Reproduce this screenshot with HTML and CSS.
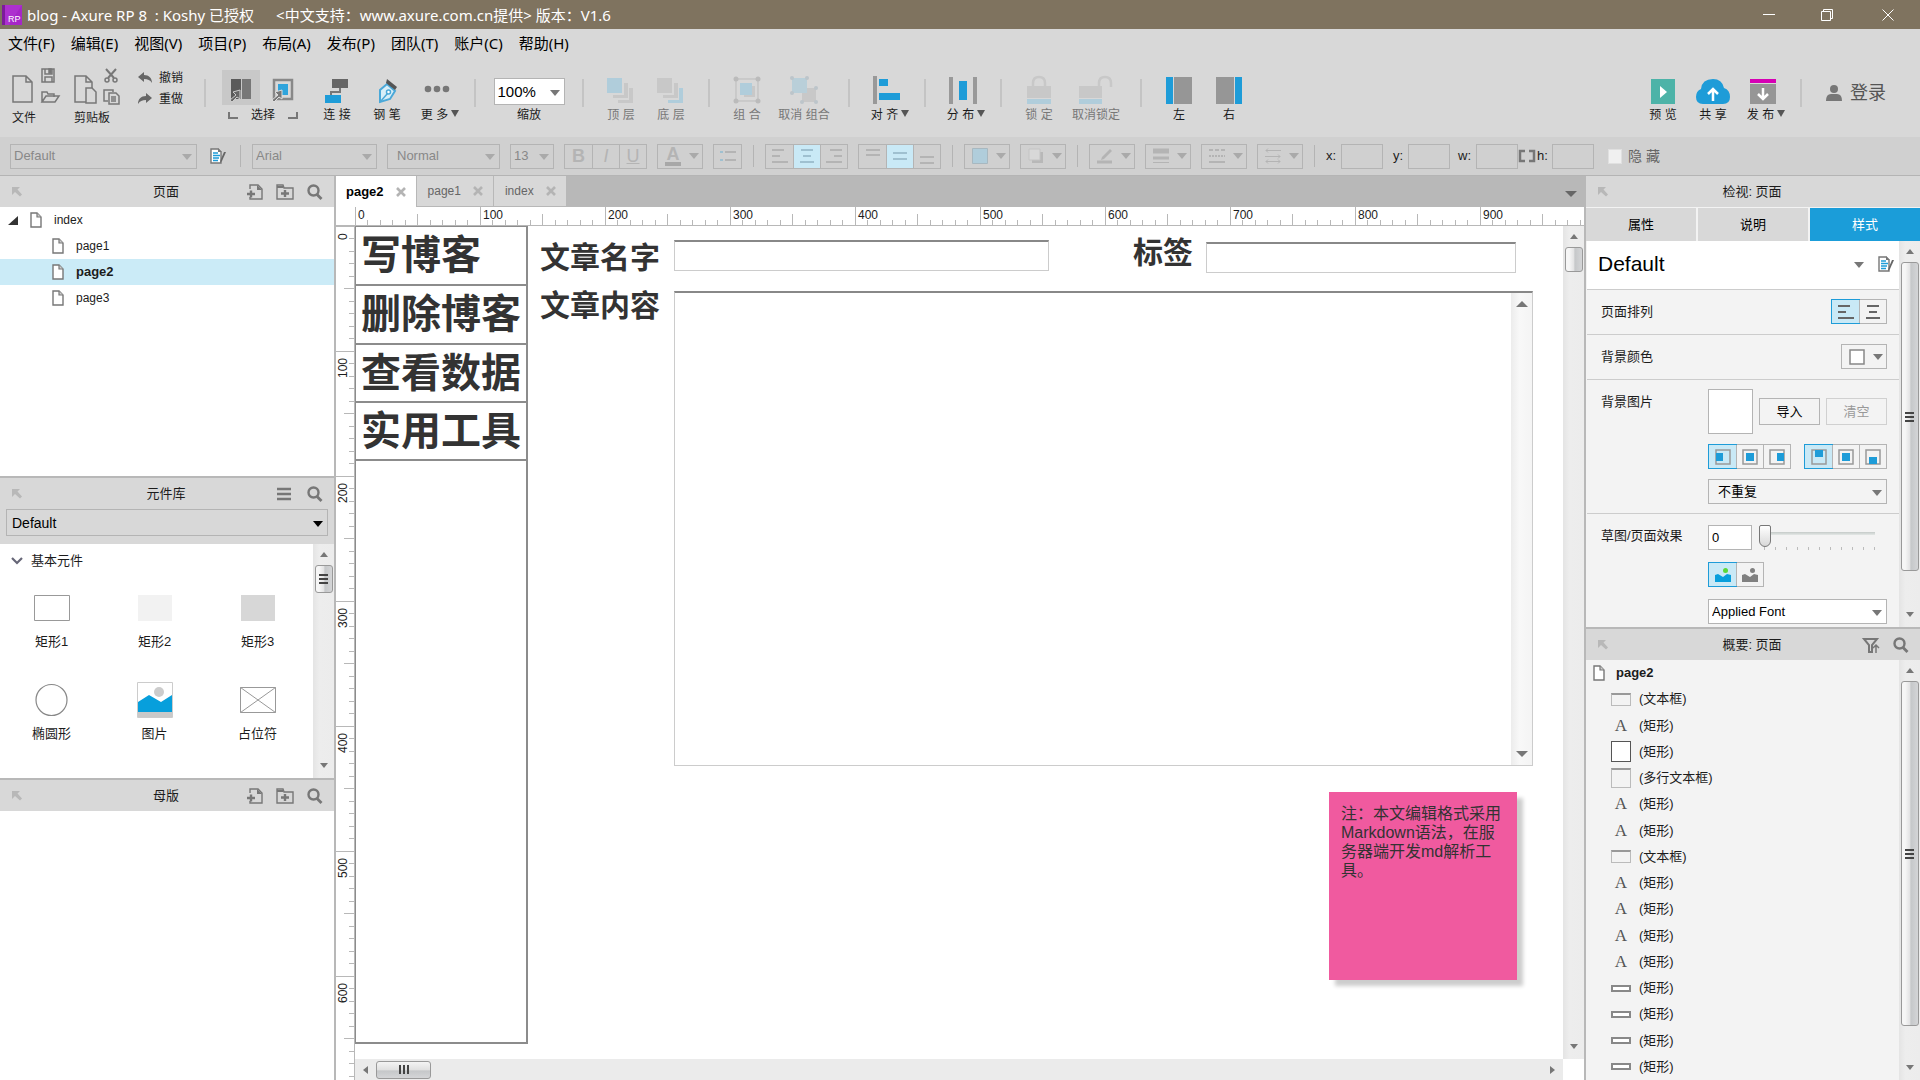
FILE: index.html
```html
<!DOCTYPE html>
<html lang="zh-CN">
<head>
<meta charset="utf-8">
<title>blog - Axure RP 8</title>
<link rel="stylesheet" href="styles.css">
</head>
<body>
<svg class="defs" aria-hidden="true">
  <symbol id="page" viewBox="0 0 12 16"><path d="M1 1h6l4 4v10H1z" fill="#fff" stroke="#777" stroke-width="1.4"/><path d="M7 1v4h4" fill="#ccc" stroke="#777" stroke-width="1.2"/></symbol>
  <symbol id="search" viewBox="0 0 16 16"><circle cx="6.5" cy="6.5" r="5" fill="none" stroke="#777" stroke-width="2.4"/><path d="M10 10.5l4.500 4.500" stroke="#777" stroke-width="2.8"/></symbol>
  <symbol id="pop" viewBox="0 0 10 10"><path d="M0 0h8L5.500 2.500 10 7.500 8 9.500 3 5 0 8z" fill="#b8b8b8"/></symbol>
  <symbol id="addpage" viewBox="0 0 16 16"><path d="M3 5V1h8l4 4v10H3v-2" fill="none" stroke="#777" stroke-width="1.4"/><path d="M10 1v5h5z" fill="#777"/><path d="M0 10h8M4 6.500v7" stroke="#777" stroke-width="2.400"/></symbol>
  <symbol id="addfolder" viewBox="0 0 18 16"><path d="M1 15V1h6l1 3h9v11z" fill="none" stroke="#777" stroke-width="1.400"/><path d="M1 2h6v2H1z" fill="#777"/><path d="M5 9.500h8M9 6v7" stroke="#777" stroke-width="2.400"/></symbol>
  <symbol id="x" viewBox="0 0 10 10"><path d="M1 1l8 8M9 1L1 9" stroke="#b4b4b4" stroke-width="2.600"/></symbol>
  <symbol id="style" viewBox="0 0 17 16"><path d="M1 1h7l3 3v11H1z" fill="#fff" stroke="#777" stroke-width="1.400"/><path d="M8 0v4h4z" fill="#777"/><path d="M3 5h5M3 7.500h7M3 10h6M3 12.500h5" stroke="#1e9cd8" stroke-width="1.500"/><path d="M16 4l-4 9-2 2 .500-3 3.500-8z" fill="#666"/></symbol>
  <symbol id="al" viewBox="0 0 16 16"><path d="M0 2h12M0 8h8M0 14h16" stroke="currentColor" stroke-width="2"/></symbol>
  <symbol id="ac" viewBox="0 0 16 16"><path d="M2 2h12M4 8h8M1 14h14" stroke="currentColor" stroke-width="2"/></symbol>
  <symbol id="ar" viewBox="0 0 16 16"><path d="M4 2h12M8 8h8M0 14h16" stroke="currentColor" stroke-width="2"/></symbol>
  <symbol id="thumb-pic" viewBox="0 0 16 14"><circle cx="10.500" cy="2.500" r="2.500" fill="var(--sun)"/><path d="M0 7l3-1 5 3 4-3 4 1v7H0z" fill="currentColor"/></symbol>
</svg>

<header class="titlebar">
  <svg class="logo" width="20" height="20" viewBox="0 0 20 20"><path d="M0 0h20v20H0z" fill="#a626c8"/><path d="M0 0h3v20H0z" fill="#7d1a9c"/><path d="M3 0h17L7 20H3z" fill="#b43ad6" opacity=".5"/><text x="6" y="17" class="logo-text">RP</text></svg>
  <h1 class="title">blog - Axure RP 8&nbsp; : Koshy 已授权<span class="title-extra">&lt;中文支持：www.axure.com.cn提供&gt; 版本：V1.6</span></h1>
  <button class="win" aria-label="最小化"><svg width="12" height="12"><path d="M0 5.500h12" stroke="#fff"/></svg></button>
  <button class="win" aria-label="还原"><svg width="12" height="12"><path d="M.5 2.500h9v9h-9zM2.500 2.500v-2h9v9h-2" fill="none" stroke="#fff"/></svg></button>
  <button class="win" aria-label="关闭"><svg width="12" height="12"><path d="M.5.500l11 11M11.500.500l-11 11" stroke="#fff"/></svg></button>
</header>

<nav class="menubar">
  <button>文件(F)</button><button>编辑(E)</button><button>视图(V)</button><button>项目(P)</button><button>布局(A)</button><button>发布(P)</button><button>团队(T)</button><button>账户(C)</button><button>帮助(H)</button>
</nav>

<div class="toolbar">
  <div class="filegroup">
    <svg width="47" height="38" viewBox="0 0 47 38" fill="none" stroke="#777" stroke-width="1.500">
      <path d="M1 8h13l6 6v20H1zM14 8v6h6"/>
      <path d="M30 1h12v13H30zM33 1v5h7V1M33 14V9h7v5"/><path d="M37 1h2v4h-2z" fill="#777"/>
      <path d="M30 34V24h5l1 2h6v3M30 34l4-6h13l-4 6z"/>
    </svg>
    <span>文件</span>
  </div>
  <div class="filegroup clip">
    <svg width="47" height="38" viewBox="0 0 47 38" fill="none" stroke="#777" stroke-width="1.500">
      <path d="M12 34H1V8h11l6 6v6M12 8v6h6"/><path d="M12 20h6l4 4v11H12z" fill="#d8d8d8"/>
      <path d="M32 1l8 9M42 1l-8 9" stroke-width="2"/><circle cx="33" cy="12" r="2"/><circle cx="41" cy="12" r="2"/>
      <path d="M34 33h-4V22h9v2"/><path d="M35 25h7l3 3v8H35zM37 29h5M37 31h5M37 33h5"/>
    </svg>
    <span>剪贴板</span>
  </div>
  <div class="undo">
    <button><svg width="14" height="12" viewBox="0 0 14 12"><path d="M6 0v3c5 0 8 3 8 8-2-3-4-4-8-4v3L0 5z" fill="#666"/></svg>撤销</button>
    <button><svg width="14" height="12" viewBox="0 0 14 12"><path d="M8 0v3C3 3 0 6 0 11c2-3 4-4 8-4v3l6-5z" fill="#666"/></svg>重做</button>
  </div>
  <i class="sep"></i>
  <div class="selectgroup">
    <div class="modes">
      <button class="on" aria-label="相交选择"><svg width="22" height="22" viewBox="0 0 22 22"><path d="M1 1h10v20H1z" fill="#5a5a5a"/><path d="M12 1h9v20h-9z" fill="#777"/><path d="M10 12v9l-3-2-5 5-2-2 6-5-3-3z" fill="#666" stroke="#ccc"/></svg></button>
      <button aria-label="包含选择"><svg width="22" height="22" viewBox="0 0 22 22"><path d="M2 2h18v19H2z" fill="none" stroke="#888" stroke-width="2.500"/><path d="M6 6h10v11H6z" fill="#2fa4dc"/><path d="M10 12v9l-3-2-5 5-2-2 6-5-3-3z" fill="#777" stroke="#ddd"/></svg></button>
    </div>
    <div class="modelabel"><i></i><span>选择</span><i class="r"></i></div>
  </div>
  <button class="tool"><svg viewBox="0 0 28 28"><path d="M9 3h16v9H9z" fill="#666"/><path d="M17 12v4h-9v4" fill="none" stroke="#777" stroke-width="2"/><path d="M2 19h16v8H2z" fill="#1e9cd8"/></svg>连 接</button>
  <button class="tool"><svg viewBox="0 0 28 28"><path d="M7 26V14l7-6 8 7-5 8z" fill="#d8eef8" stroke="#4aa8d8" stroke-width="2"/><path d="M7 26l8-9" stroke="#4aa8d8" stroke-width="1.500"/><circle cx="15.500" cy="16" r="2" fill="#fff" stroke="#4aa8d8" stroke-width="1.500"/><path d="M14 3l10 8-2 3-9-7z" fill="#555"/></svg>钢 笔</button>
  <button class="tool"><svg viewBox="0 0 28 28" fill="#777"><circle cx="5" cy="13" r="3.300"/><circle cx="14" cy="13" r="3.300"/><circle cx="23" cy="13" r="3.300"/></svg><span>更 多<i class="tri"></i></span></button>
  <i class="sep"></i>
  <div class="zoom"><span class="dd white"><select id="zoom"><option>100%</option></select></span><label for="zoom">缩放</label></div>
  <i class="sep"></i>
  <button class="tool off" disabled><svg viewBox="0 0 28 28"><path d="M0 2h15v15H0z" fill="#b0cddb"/><path d="M17 7h4v15H6v-3h11zM22 12h4v15H11v-3h11z" fill="#c8c8c8"/></svg>顶 层</button>
  <button class="tool off" disabled><svg viewBox="0 0 28 28"><path d="M0 2h15v15H0zM17 7h4v15H6v-3h11z" fill="#c8c8c8"/><path d="M22 12h4v15H11v-3h11z" fill="#b0cddb"/></svg>底 层</button>
  <i class="sep"></i>
  <button class="tool off" disabled><svg viewBox="0 0 28 28"><path d="M3 3h22v22H3z" fill="none" stroke="#bbb"/><path d="M11 10h11v11H11z" fill="#c8c8c8"/><path d="M7 7h12v12H7z" fill="#b0cddb"/><g fill="#bbb"><circle cx="3" cy="3" r="2.500"/><circle cx="25" cy="3" r="2.500"/><circle cx="3" cy="25" r="2.500"/><circle cx="25" cy="25" r="2.500"/></g></svg>组 合</button>
  <button class="tool wide off" disabled><svg viewBox="0 0 28 28"><path d="M12 12h14v14H12z" fill="#c8c8c8"/><path d="M2 2h15v15H2z" fill="#b9cfd9"/><g fill="#bcc5ca"><circle cx="2" cy="2" r="2"/><circle cx="17" cy="2" r="2"/><circle cx="2" cy="17" r="2"/><circle cx="26" cy="12" r="2"/><circle cx="26" cy="26" r="2"/><circle cx="12" cy="26" r="2"/></g></svg>取消 组合</button>
  <i class="sep"></i>
  <button class="tool"><svg viewBox="0 0 28 28"><path d="M0 0h4v28H0z" fill="#999"/><path d="M6 3h9v7H6zM6 17h21v7H6z" fill="#1e9cd8"/></svg><span>对 齐<i class="tri"></i></span></button>
  <i class="sep"></i>
  <button class="tool"><svg viewBox="0 0 28 28"><path d="M0 1h4v27H0zM24 1h4v27h-4z" fill="#999"/><path d="M10 5h8v19h-8z" fill="#1e9cd8"/></svg><span>分 布<i class="tri"></i></span></button>
  <i class="sep"></i>
  <button class="tool off" disabled><svg viewBox="0 0 28 28"><path d="M8 11V7q0-6 6-6t6 6v4" fill="none" stroke="#c8c8c8" stroke-width="2.500"/><path d="M2 10h24v12H2z" fill="#c8c8c8"/><path d="M2 23h24v5H2z" fill="#b0cddb"/></svg>锁 定</button>
  <button class="tool wide off" disabled><svg viewBox="0 0 28 28"><path d="M17 11V7q0-6 6-6t6 6v4" fill="none" stroke="#c8c8c8" stroke-width="2.500"/><path d="M-3 10h23v12H-3z" fill="#c8c8c8"/><path d="M-3 23h23v5H-3z" fill="#b0cddb"/></svg>取消锁定</button>
  <i class="sep"></i>
  <button class="tool"><svg viewBox="0 0 28 28"><path d="M1 1h7v27H1z" fill="#1e9cd8"/><path d="M9 1h18v27H9z" fill="#969696"/></svg>左</button>
  <button class="tool"><svg viewBox="0 0 28 28"><path d="M20 1h7v27h-7z" fill="#1e9cd8"/><path d="M1 1h18v27H1z" fill="#969696"/></svg>右</button>
  <div class="right">
    <button class="tool"><svg viewBox="0 0 28 28"><path d="M2 3h24v25H2z" fill="#4db3a8"/><path d="M11 10l7 6-7 6z" fill="#fff"/></svg>预 览</button>
    <button class="tool"><svg width="34" height="28" viewBox="-3 0 34 28"><path d="M4 28q-7 0-7-7 0-6 5-8Q3 3 14 3q9 0 11 9 6 2 6 9 0 7-7 7z" fill="#1e9cd8"/><path d="M14 25V14M9 18l5-5 5 5" fill="none" stroke="#fff" stroke-width="2.500"/></svg>共 享</button>
    <button class="tool"><svg viewBox="0 0 28 28"><path d="M1 3h26v4H1z" fill="#d600b4"/><path d="M1 8h26v20H1z" fill="#969696"/><path d="M14 12v11M9 18l5 5 5-5" fill="none" stroke="#fff" stroke-width="2.500"/></svg><span>发 布<i class="tri"></i></span></button>
    <i class="sep"></i>
    <button class="login"><svg width="16" height="16" viewBox="0 0 16 16" fill="#777"><circle cx="8" cy="4" r="4"/><path d="M0 16q0-7 5-7h6q5 0 5 7z"/></svg>登录</button>
  </div>
</div>

<div class="formatbar">
  <span class="dd w187"><select aria-label="样式" disabled><option>Default</option></select></span>
  <button class="plain" aria-label="管理样式"><svg width="17" height="16"><use href="#style"/></svg></button>
  <i class="sep"></i>
  <span class="dd w125"><select aria-label="字体" disabled><option>Arial</option></select></span>
  <span class="dd w113 indent"><select aria-label="字形" disabled><option>Normal</option></select></span>
  <span class="dd w44"><select aria-label="字号" disabled><option>13</option></select></span>
  <div class="seg"><button disabled><b>B</b></button><button disabled><em>I</em></button><button disabled><u>U</u></button></div>
  <button class="drop" disabled aria-label="文字颜色"><b class="fontcolor">A</b></button>
  <div class="seg"><button disabled aria-label="项目符号"><svg width="16" height="16"><path d="M0 4h3M0 12h3" stroke="#9fc0d0" stroke-width="2"/><path d="M5 4h11M5 12h11" stroke="#b4b4b4" stroke-width="2"/></svg></button></div>
  <i class="sep"></i>
  <div class="seg"><button disabled aria-label="左对齐"><svg width="16" height="16"><use href="#al"/></svg></button><button disabled class="on" aria-label="居中"><svg width="16" height="16"><use href="#ac"/></svg></button><button disabled aria-label="右对齐"><svg width="16" height="16"><use href="#ar"/></svg></button></div>
  <div class="seg"><button disabled aria-label="顶部"><svg width="16" height="16"><path d="M1 2h14M1 7h14" stroke="#b4b4b4" stroke-width="2"/></svg></button><button disabled class="on" aria-label="中部"><svg width="16" height="16"><path d="M1 5h14M1 11h14" stroke="#9fc0d0" stroke-width="2"/></svg></button><button disabled aria-label="底部"><svg width="16" height="16"><path d="M1 9h14M1 15h14" stroke="#b4b4b4" stroke-width="2"/></svg></button></div>
  <i class="sep"></i>
  <button class="drop" disabled aria-label="填充"><svg width="16" height="16"><path d="M.5.500h15v15H.5z" fill="#b0cddb" stroke="#a8b8c0"/></svg></button>
  <button class="drop" disabled aria-label="阴影"><svg width="16" height="16"><path d="M4 4h11v11H4z" fill="#b8b8b8"/><path d="M1 1h11v11H1z" fill="#d8d8d8" stroke="#c4c4c4"/></svg></button>
  <i class="sep"></i>
  <button class="drop" disabled aria-label="线条颜色"><svg width="18" height="16"><path d="M0 14h15" stroke="#b4b4b4" stroke-width="3"/><path d="M4 12l1-3 8-8 2 2-8 8z" fill="#b4b4b4"/></svg></button>
  <button class="drop" disabled aria-label="线宽"><svg width="16" height="16"><path d="M0 3h16" stroke="#b4b4b4" stroke-width="5"/><path d="M0 10h16" stroke="#b4b4b4" stroke-width="3"/><path d="M0 14.500h16" stroke="#b4b4b4"/></svg></button>
  <button class="drop" disabled aria-label="线型"><svg width="16" height="16" stroke="#b4b4b4" stroke-width="2"><path d="M0 2h16" stroke-dasharray="4 2"/><path d="M0 8h16" stroke-dasharray="2 1"/><path d="M0 14h16"/></svg></button>
  <button class="drop" disabled aria-label="箭头"><svg width="16" height="16" stroke="#b4b4b4" fill="none"><path d="M1 2.500h15M3 .500l-2 2 2 2M0 8.500h15M13 6.500l2 2-2 2M1 13.500h14M3 11.500l-2 2 2 2M13 11.500l2 2-2 2"/></svg></button>
  <i class="sep"></i>
  <label class="num"><span>x:</span><input disabled></label>
  <label class="num"><span>y:</span><input disabled></label>
  <label class="num w"><span>w:</span><input disabled></label>
  <svg class="link" width="16" height="12"><path d="M6 1H1v10h5M10 1h5v10h-5" fill="none" stroke="#777" stroke-width="2.500"/></svg>
  <label class="num h"><span>h:</span><input disabled></label>
  <label class="hide"><input type="checkbox" disabled>隐 藏</label>
</div>

<main class="work">
  <aside class="left">
    <section class="pages">
      <div class="phead"><svg width="10" height="10"><use href="#pop"/></svg><h2>页面</h2><div class="acts"><button aria-label="添加页面"><svg width="16" height="16"><use href="#addpage"/></svg></button><button aria-label="添加文件夹"><svg width="18" height="16"><use href="#addfolder"/></svg></button><button aria-label="搜索"><svg width="16" height="16"><use href="#search"/></svg></button></div></div>
      <ul class="tree">
        <li class="root"><svg class="twist" width="10" height="9"><path d="M10 0v9H0z" fill="#333"/></svg><svg width="12" height="16"><use href="#page"/></svg>index</li>
        <li><svg width="12" height="16"><use href="#page"/></svg>page1</li>
        <li class="sel"><svg width="12" height="16"><use href="#page"/></svg>page2</li>
        <li><svg width="12" height="16"><use href="#page"/></svg>page3</li>
      </ul>
    </section>
    <section class="library">
      <div class="phead"><svg width="10" height="10"><use href="#pop"/></svg><h2>元件库</h2><div class="acts"><button aria-label="选项"><svg width="18" height="14"><path d="M1 2h14M1 7h14M1 12h14" stroke="#777" stroke-width="2.500"/></svg></button><button aria-label="搜索"><svg width="16" height="16"><use href="#search"/></svg></button></div></div>
      <div class="libpick"><span class="dd dark"><select aria-label="元件库选择"><option>Default</option></select></span></div>
      <div class="scrolled">
        <div class="widgets">
          <h3><svg width="12" height="8"><path d="M1 1l5 5 5-5" fill="none" stroke="#667" stroke-width="2.200"/></svg>基本元件</h3>
          <ul>
            <li><svg width="36" height="36"><path d="M.5 5.500h35v25H.5z" fill="#fff" stroke="#999"/></svg>矩形1</li>
            <li><svg width="36" height="36"><path d="M1 5h34v26H1z" fill="#f2f2f2"/></svg>矩形2</li>
            <li><svg width="36" height="36"><path d="M1 5h34v26H1z" fill="#d7d7d7"/></svg>矩形3</li>
            <li><svg width="36" height="36"><circle cx="17.500" cy="18" r="15.500" fill="#fff" stroke="#888" stroke-width="1.200"/></svg>椭圆形</li>
            <li><svg width="36" height="36"><path d="M.5.500h35v35H.5z" fill="#fff" stroke="#ccc"/><circle cx="22" cy="10" r="5" fill="#ccc"/><path d="M1 20l11-7 12 7 11-7v17H1z" fill="#079fdc"/><path d="M1 30h34v5H1z" fill="#c9c9c9"/></svg>图片</li>
            <li><svg width="36" height="36"><path d="M.5 5.500h35v25H.5zM.5 5.500l35 25M35.500 5.500l-35 25" fill="#fff" stroke="#999"/></svg>占位符</li>
          </ul>
        </div>
        <div class="sbar"><i class="up"></i><i class="thumb short"></i><i class="down"></i></div>
      </div>
    </section>
    <section class="masters">
      <div class="phead"><svg width="10" height="10"><use href="#pop"/></svg><h2>母版</h2><div class="acts"><button aria-label="添加母版"><svg width="16" height="16"><use href="#addpage"/></svg></button><button aria-label="添加文件夹"><svg width="18" height="16"><use href="#addfolder"/></svg></button><button aria-label="搜索"><svg width="16" height="16"><use href="#search"/></svg></button></div></div>
    </section>
  </aside>

  <section class="center">
    <div class="tabs">
      <div class="tab on">page2<button aria-label="关闭"><svg width="10" height="10"><use href="#x"/></svg></button></div>
      <div class="tab">page1<button aria-label="关闭"><svg width="10" height="10"><use href="#x"/></svg></button></div>
      <div class="tab">index<button aria-label="关闭"><svg width="10" height="10"><use href="#x"/></svg></button></div>
      <i class="more"></i>
    </div>
    <div class="hruler"><span>0</span><span>100</span><span>200</span><span>300</span><span>400</span><span>500</span><span>600</span><span>700</span><span>800</span><span>900</span></div>
    <div class="vruler"><span>0</span><span>100</span><span>200</span><span>300</span><span>400</span><span>500</span><span>600</span></div>
    <div class="canvas">
      <div class="side">
        <div>写博客</div><div>删除博客</div><div>查看数据</div><div>实用工具</div>
      </div>
      <label class="cap cap-name" for="f-name">文章名字</label>
      <input class="field f-name" id="f-name">
      <label class="cap cap-tag" for="f-tag">标签</label>
      <input class="field f-tag" id="f-tag">
      <label class="cap cap-body" for="f-body">文章内容</label>
      <div class="field f-body"><textarea id="f-body"></textarea><div class="sbar light"><i class="up"></i><i class="down"></i></div></div>
      <div class="note">注：本文编辑格式采用Markdown语法，在服务器端开发md解析工具。</div>
    </div>
    <div class="sbar vs"><i class="up"></i><i class="thumb tiny"></i><i class="down"></i></div>
    <div class="hbar"><i class="lt"></i><i class="thumb"></i><i class="rt"></i></div>
  </section>

  <aside class="inspector">
    <div class="phead"><svg width="10" height="10"><use href="#pop"/></svg><h2>检视: 页面</h2></div>
    <div class="itabs"><button>属性</button><button>说明</button><button class="on">样式</button></div>
    <div class="props">
      <div class="form">
        <div class="stylename"><span class="dd"><select aria-label="页面样式"><option>Default</option></select></span><button class="plain" aria-label="管理样式"><svg width="17" height="16"><use href="#style"/></svg></button></div>
        <div class="row"><span>页面排列</span><div class="seg live"><button class="on" aria-label="左"><svg width="16" height="16"><use href="#al"/></svg></button><button aria-label="中"><svg width="16" height="16"><use href="#ac"/></svg></button></div></div>
        <div class="row"><span>背景颜色</span><button class="drop live" aria-label="背景颜色"><svg width="16" height="16"><path d="M1 1h14v14H1z" fill="#fff" stroke="#888" stroke-width="1.500"/></svg></button></div>
        <div class="row tall"><span>背景图片</span>
          <div class="stack">
            <div class="line"><i class="preview"></i><button class="btn">导入</button><button class="btn" disabled>清空</button></div>
            <div class="line"><div class="seg live"><button class="on" aria-label="左"><svg width="16" height="16"><path d="M1 1h14v14H1z" fill="none" stroke="#999" stroke-width="1.500"/><path d="M1 4h7v8H1z" fill="#1e9cd8"/></svg></button><button aria-label="中"><svg width="16" height="16"><path d="M1 1h14v14H1z" fill="none" stroke="#999" stroke-width="1.500"/><path d="M4 4h8v8H4z" fill="#1e9cd8"/></svg></button><button aria-label="右"><svg width="16" height="16"><path d="M1 1h14v14H1z" fill="none" stroke="#999" stroke-width="1.500"/><path d="M8 4h7v8H8z" fill="#1e9cd8"/></svg></button></div>
            <div class="seg live"><button class="on" aria-label="上"><svg width="16" height="16"><path d="M1 1h14v14H1z" fill="none" stroke="#999" stroke-width="1.500"/><path d="M4 1h8v7H4z" fill="#1e9cd8"/></svg></button><button aria-label="中"><svg width="16" height="16"><path d="M1 1h14v14H1z" fill="none" stroke="#999" stroke-width="1.500"/><path d="M4 4h8v8H4z" fill="#1e9cd8"/></svg></button><button aria-label="下"><svg width="16" height="16"><path d="M1 1h14v14H1z" fill="none" stroke="#999" stroke-width="1.500"/><path d="M4 8h8v7H4z" fill="#1e9cd8"/></svg></button></div></div>
            <span class="dd indent"><select aria-label="重复"><option>不重复</option></select></span>
          </div>
        </div>
        <div class="row tall sketch"><label for="sk">草图/页面效果</label>
          <div class="stack">
            <div class="line"><input class="skv" id="sk" value="0"><div class="slider"><input type="range" min="0" max="100" value="0" aria-label="草图程度"></div></div>
            <div class="line"><div class="seg live"><button class="on color" aria-label="彩色"><svg width="16" height="14"><use href="#thumb-pic"/></svg></button><button class="gray" aria-label="灰度"><svg width="16" height="14"><use href="#thumb-pic"/></svg></button></div></div>
            <span class="dd white"><select aria-label="应用字体"><option>Applied Font</option></select></span>
          </div>
        </div>
      </div>
      <div class="sbar"><i class="up"></i><i class="thumb mid"></i><i class="down"></i></div>
    </div>
    <div class="phead top"><svg width="10" height="10"><use href="#pop"/></svg><h2>概要: 页面</h2><div class="acts"><button aria-label="筛选"><svg width="17" height="16"><path d="M1 2h13L9 8v7H6V8z" fill="none" stroke="#777" stroke-width="2"/><path d="M13 16V8M10 11l3-3 3 3" fill="none" stroke="#777" stroke-width="1.500"/></svg></button><button aria-label="搜索"><svg width="16" height="16"><use href="#search"/></svg></button></div></div>
    <div class="outline">
      <ul>
        <li class="top"><svg width="12" height="16"><use href="#page"/></svg>page2</li>
        <li><i class="g text"></i>(文本框)</li>
        <li><i class="g a">A</i>(矩形)</li>
        <li><i class="g box"></i>(矩形)</li>
        <li><i class="g area"></i>(多行文本框)</li>
        <li><i class="g a">A</i>(矩形)</li>
        <li><i class="g a">A</i>(矩形)</li>
        <li><i class="g text"></i>(文本框)</li>
        <li><i class="g a">A</i>(矩形)</li>
        <li><i class="g a">A</i>(矩形)</li>
        <li><i class="g a">A</i>(矩形)</li>
        <li><i class="g a">A</i>(矩形)</li>
        <li><i class="g bar"></i>(矩形)</li>
        <li><i class="g bar"></i>(矩形)</li>
        <li><i class="g bar"></i>(矩形)</li>
        <li><i class="g bar"></i>(矩形)</li>
      </ul>
      <div class="sbar"><i class="up"></i><i class="thumb long"></i><i class="down"></i></div>
    </div>
  </aside>
</main>
</body>
</html>
```
FILE: styles.css
```css
* { box-sizing: border-box; }
body {
  margin: 0;
  height: 100vh;
  display: flex;
  flex-direction: column;
  overflow: hidden;
  background: #d8d8d8;
  color: #1c1c1c;
  font: 13px/16px "Liberation Sans", "Noto Sans CJK SC", sans-serif;
}
button, input, select, textarea { font: inherit; color: inherit; margin: 0; padding: 0; border: 0; background: none; border-radius: 0; }
h1, h2, h3, ul { margin: 0; padding: 0; font: inherit; list-style: none; }
svg { flex: none; overflow: visible; }
i { font-style: normal; flex: none; }
.defs { position: absolute; width: 0; height: 0; }

/* title and menu */
.titlebar { flex: none; height: 29px; display: flex; align-items: center; background: #7f735f; color: #fff; }
.logo { margin: 0 5px 0 2px; }
.logo-text { font: 9px "Liberation Sans", sans-serif; fill: #fff; }
.title { flex: 1; font: 15px/20px "Noto Sans", "Noto Sans CJK SC", sans-serif; white-space: nowrap; }
.title-extra { margin-left: 22px; }
.win { width: 58px; height: 29px; display: grid; place-items: center; }
.win:last-child { width: 64px; }
.menubar { flex: none; height: 30px; display: flex; align-items: flex-start; gap: 16px; padding: 4px 0 0 8px; font: 15px/20px "Noto Sans", "Noto Sans CJK SC", sans-serif; color: #000; white-space: nowrap; }

/* main toolbar */
.toolbar { flex: none; height: 78px; display: flex; align-items: flex-start; padding: 9px 34px 0 12px; font-size: 12px; white-space: nowrap; }
.toolbar .sep { width: 2px; height: 28px; margin: 11px 12px 0; background: #c4c4c4; }
.filegroup { width: 62px; height: 58px; display: flex; flex-direction: column; justify-content: space-between; }
.filegroup.clip { width: 64px; }
.undo { width: 54px; display: flex; flex-direction: column; gap: 5px; padding-top: 2px; }
.undo button { display: flex; align-items: center; gap: 7px; height: 16px; }
.selectgroup { width: 80px; margin: 2px 10px 0 4px; }
.modes { display: flex; gap: 4px; }
.modes button { width: 38px; height: 35px; display: grid; place-items: center; padding-top: 2px; }
.modes .on { background: #c8c8c8; }
.modelabel { display: flex; align-items: center; justify-content: space-between; padding: 2px 4px 0 6px; }
.modelabel i { width: 10px; height: 7px; border: solid #777; border-width: 0 0 2px 2px; }
.modelabel .r { border-width: 0 2px 2px 0; }
.tool { width: 50px; display: flex; flex-direction: column; align-items: center; gap: 3px; padding-top: 8px; }
.tool > svg:not([width]) { width: 28px; height: 28px; }
.tool.wide { width: 64px; }
.tool.off { color: #777; }
.tri { display: inline-block; margin-left: 3px; border: solid transparent; border-width: 7px 4px 0; border-top-color: #555; vertical-align: 2px; }
.tool .tri { margin-right: -6px; }
.zoom { width: 82px; padding: 10px 6px 0; display: flex; flex-direction: column; align-items: center; gap: 2px; margin-bottom: 4px; }
.zoom .dd { width: 71px; height: 27px; font-size: 15px; }
.right { margin-left: auto; display: flex; }
.login { display: flex; align-items: center; gap: 8px; height: 28px; margin: 11px 0 0 12px; font-size: 18px; line-height: 24px; color: #555; }

/* drop-downs and button groups */
.dd { position: relative; display: flex; height: 25px; border: 1px solid #b4b4b4; }
.dd select { flex: 1; appearance: none; padding: 0 18px 0 3px; opacity: 1; }
.dd::after, .drop::after { content: ""; border: solid transparent; border-width: 6px 5px 0; border-top-color: #777; pointer-events: none; }
.dd::after { position: absolute; right: 4px; top: calc(50% - 2px); }
.dd.white { background: #fff; color: #000; }
.dd.indent select { padding-left: 9px; }
.seg { display: flex; height: 25px; border: 1px solid #b4b4b4; }
.seg button { width: 27px; display: grid; place-items: center; color: #b4b4b4; font-size: 18px; }
.seg button + button { border-left: 1px solid #b4b4b4; }
.seg .on { background: #c9e9f6; color: #9fc0d0; }
.drop { width: 46px; height: 25px; border: 1px solid #b4b4b4; display: flex; align-items: center; justify-content: space-between; padding: 0 3px 0 7px; color: #b4b4b4; }
.seg.live button { color: #666; }
.seg.live .on { outline: 1px solid #1e9cd8; }

/* format bar */
.formatbar { flex: none; height: 39px; display: flex; align-items: center; gap: 10px; padding: 0 10px; background: #d0d0d0; border-bottom: 1px solid #b4b4b4; font-size: 13px; white-space: nowrap; }
.formatbar .sep { width: 1px; height: 22px; margin: 0 1px; background: #b4b4b4; }
.formatbar .dd { color: #888; }
.formatbar .dd::after, .formatbar .drop::after { border-top-color: #aaa; }
.formatbar .plain { margin: 0 2px 0 3px; height: 16px; }
.w187 { width: 187px; } .w125 { width: 125px; } .w113 { width: 113px; } .w44 { width: 44px; }
.fontcolor { width: 16px; height: 20px; font-size: 18px; line-height: 16px; border-bottom: 4px solid #a8a8a8; }
.num { display: flex; align-items: center; }
.num span { width: 15px; }
.num.w { margin-left: -2px; }
.num.w span { width: 18px; }
.num.h { margin-left: -8px; }
.num input { width: 42px; height: 25px; border: 1px solid #b4b4b4; }
.link { margin-left: -9px; }
.hide { display: flex; align-items: center; gap: 6px; margin-left: 4px; font-size: 14px; color: #666; }
.hide input { appearance: none; width: 14px; height: 15px; background: #f0f0f0; border: 1px solid #e0e0e0; }

/* panels */
.work { flex: 1; min-height: 0; display: grid; grid-template-columns: 336px 1fr 336px; }
.left { display: flex; flex-direction: column; background: #fff; border-right: 2px solid #b8b8b8; min-height: 0; }
.phead { flex: none; position: relative; height: 31px; display: flex; align-items: center; padding: 0 12px; background: #d8d8d8; }
.phead h2 { flex: 1; text-align: center; margin-right: 12px; }
.acts { position: absolute; right: 11px; top: 0; height: 31px; display: flex; align-items: center; gap: 13px; }
.acts button { height: 16px; display: grid; place-items: center; }
.pages { height: 300px; }
.tree li { height: 26px; display: flex; align-items: center; gap: 12px; padding-left: 52px; font-size: 12px; }
.tree .root { padding-left: 8px; }
.tree .sel { background: #cbebf7; font-weight: bold; font-size: 13px; }
.library { height: 302px; display: flex; flex-direction: column; border-top: 2px solid #b8b8b8; }
.libpick { background: #d8d8d8; padding: 0 6px 8px; }
.libpick .dd { height: 27px; font-size: 14px; }
.dd.dark::after { border-top-color: #000; }
.dd.dark select { padding-left: 5px; color: #000; }
.scrolled { flex: 1; display: flex; min-height: 0; }
.widgets { flex: 1; padding-top: 9px; overflow: hidden; }
.widgets h3 { display: flex; align-items: center; gap: 8px; padding-left: 11px; }
.widgets ul { display: grid; grid-template-columns: repeat(3, 1fr); grid-auto-rows: 92px; padding: 21px 4px 0 0; }
.widgets li { display: flex; flex-direction: column; align-items: center; gap: 8px; }
.masters { flex: 1; border-top: 2px solid #b8b8b8; }

/* scroll bars */
.sbar { flex: none; width: 21px; display: flex; flex-direction: column; align-items: center; padding: 8px 0 10px; background: linear-gradient(90deg, #e4e4e4, #ededed 30%, #ececec); }
.up, .down { border: solid transparent; border-width: 0 4px 5px; border-bottom-color: #777; }
.down { border-width: 5px 4px 0; border-top-color: #777; margin-top: auto; }
.thumb { width: 18px; margin-top: 8px; border: 1px solid #999; border-radius: 3px; background: linear-gradient(90deg, #f6f6f6 0 20%, #e2e2e3 50%, #c5c7c9 55%, #d4d5d7); display: grid; place-items: center; }
.thumb::after { content: ""; width: 9px; height: 10px; background: repeating-linear-gradient(#444 0 2px, transparent 2px 4px); }
.short { height: 28px; } .tiny { height: 25px; } .tiny::after { content: none; }
.mid { height: 309px; } .long { height: 345px; }
.sbar.light { background: linear-gradient(90deg, #ececec, #f8f8f8 40%, #f4f4f4); padding: 8px 0; }
.light .up { border-width: 0 6px 6px; } .light .down { border-width: 6px 6px 0; }
.hbar { grid-area: h; display: flex; align-items: center; gap: 8px; padding: 0 8px; background: #ebebeb; margin-right: 21px; }
.hbar .thumb { width: 55px; height: 18px; margin: 0; background: linear-gradient(#f4f4f4, #e0e0e0 50%, #c5c7c9 55%, #d4d5d7); }
.hbar .thumb::after { width: 10px; height: 9px; background: repeating-linear-gradient(90deg, #444 0 2px, transparent 2px 4px); }
.lt { border: solid transparent; border-width: 4px 5px 4px 0; border-right-color: #777; }
.rt { border: solid transparent; border-width: 4px 0 4px 5px; border-left-color: #777; margin-left: auto; }

/* editor */
.center { display: grid; min-width: 0; min-height: 0; background: #fff; grid-template: "t t t" 31px "r r r" 19px "v c s" minmax(0, 1fr) "v h h" 21px / 19px minmax(0, 1fr) 21px; }
.tabs { grid-area: t; display: flex; align-items: flex-start; background: #b8b8b8; }
.tab { height: 31px; display: flex; align-items: center; gap: 12px; padding: 0 10px 0 11px; background: #d8d8d8; border: solid #b8b8b8; border-width: 0 1px 1px 0; color: #666; font-size: 12px; }
.tab.on { padding: 0 10px; background: #fff; border-bottom: 0; color: #000; font-weight: bold; font-size: 13px; }
.tab button { display: grid; }
.more { margin: 15px 7px 0 auto; border: solid transparent; border-width: 6px 6px 0; border-top-color: #666; }
.hruler { grid-area: r; display: flex; padding-left: 22px; overflow: hidden; font-size: 12px; line-height: 16px;
  border-bottom: 1px solid #b8b8b8;
  background:
    repeating-linear-gradient(90deg, #b8b8b8 0 1px, transparent 1px 125px) 19px 0 / auto 18px no-repeat,
    repeating-linear-gradient(90deg, transparent 0 62px, #b8b8b8 62px 63px, transparent 63px 125px) 19px 7px / auto 11px no-repeat,
    repeating-linear-gradient(90deg, #b8b8b8 0 1px, transparent 1px 12px, #b8b8b8 12px 13px, transparent 13px 25px) 19px 13px / auto 5px no-repeat; }
.hruler span { flex: none; width: 125px; }
.vruler { grid-area: v; display: flex; flex-direction: column; padding-top: 1px; overflow: hidden; font-size: 12px; line-height: 15px;
  border-right: 1px solid #b8b8b8;
  background:
    repeating-linear-gradient(#b8b8b8 0 1px, transparent 1px 125px) 0 0 / 18px auto no-repeat,
    repeating-linear-gradient(transparent 0 62px, #b8b8b8 62px 63px, transparent 63px 125px) 8px 0 / 10px auto no-repeat,
    repeating-linear-gradient(#b8b8b8 0 1px, transparent 1px 12px, #b8b8b8 12px 13px, transparent 13px 25px) 13px 0 / 5px auto no-repeat; }
.vruler span { flex: none; height: 125px; width: 15px; padding-bottom: 6px; writing-mode: vertical-rl; transform: rotate(180deg); text-align: right; }
.vs { grid-area: s; }

/* objects on the design canvas */
.canvas { grid-area: c; position: relative; overflow: hidden; color: #333; }
.side { position: absolute; left: 0; top: 0; width: 173px; height: 818px; border: 2px solid #8c8c8c; border-width: 1px 2px 2px 1px; }
.side div { height: 59px; padding-left: 5px; border-bottom: 2px solid #8c8c8c; font-size: 40px; line-height: 56px; font-weight: bold; white-space: nowrap; }
.side div:nth-child(n+3) { height: 58px; }
.cap { position: absolute; font-size: 30px; line-height: 36px; font-weight: bold; }
.cap-name { left: 185px; top: 14px; }
.cap-body { left: 185px; top: 62px; }
.cap-tag { left: 778px; top: 9px; }
.field { position: absolute; border: 1px solid #ccc; border-top: 2px solid #888; background: #fff; }
.f-name { left: 319px; top: 14px; width: 375px; height: 31px; }
.f-tag { left: 851px; top: 16px; width: 310px; height: 31px; }
.f-body { left: 319px; top: 65px; width: 859px; height: 475px; display: flex; }
.f-body textarea { flex: 1; resize: none; }
.note { position: absolute; left: 974px; top: 566px; width: 188px; height: 188px; padding: 12px; background: #f05a9f; box-shadow: 6px 6px 4px rgba(0, 0, 0, .2); font-size: 16px; line-height: 19px; }

/* inspector */
.inspector { display: flex; flex-direction: column; min-height: 0; border-left: 2px solid #b8b8b8; background: #f3f3f3; }
.phead.top { height: 33px; border-top: 2px solid #b8b8b8; }
.itabs { flex: none; display: grid; grid-template-columns: repeat(3, 1fr); gap: 2px; padding-top: 1px; height: 34px; color: #000; }
.itabs button { background: #d8d8d8; }
.itabs .on { background: #1b9dd9; color: #fff; }
.props { flex: none; height: 386px; display: flex; }
.form { flex: 1; padding-left: 1px; overflow: hidden; }
.stylename { height: 48px; display: flex; align-items: center; background: #fff; padding: 0 4px 2px 0; }
.stylename .dd { flex: 1; border: 0; font-size: 21px; color: #000; }
.stylename .dd select { padding-left: 11px; }
.stylename .dd::after { right: 14px; }
.stylename .plain { height: 16px; }
.row { height: 45px; display: flex; align-items: center; justify-content: space-between; padding: 0 12px 1px 14px; border-top: 1px solid #ccc; }
.row.tall { align-items: flex-start; height: 134px; }
.row.tall > span, .row.tall > label { padding-top: 14px; }
.row.sketch { height: 114px; }
.stack { width: 179px; display: flex; flex-direction: column; gap: 10px; padding-top: 9px; }
.sketch .stack { gap: 12px; padding-top: 11px; }
.line { display: flex; align-items: center; justify-content: space-between; }
.preview { width: 45px; height: 45px; background: #fff; border: 1px solid #b4b4b4; }
.btn { width: 61px; height: 27px; border: 1px solid #b4b4b4; color: #000; }
.btn:disabled { color: #999; border-color: #d0d0d0; }
.stack .dd select { color: #000; }
.skv { width: 44px; height: 25px; border: 1px solid #b4b4b4; background: #fff; padding-left: 3px; color: #000; }
.slider { width: 128px; height: 25px; display: flex; background: repeating-linear-gradient(90deg, #bbb 0 1px, transparent 1px 11px) 5px 22px / 111px 4px no-repeat; }
.slider input { appearance: none; width: 116px; height: 22px; background: linear-gradient(#c4cac8, #e4e8e6) 0 7px / 100% 3px no-repeat; }
.slider input::-webkit-slider-thumb { appearance: none; width: 12px; height: 22px; background: linear-gradient(#fff, #d8d8d8); border: 1px solid #777; border-radius: 2px 2px 6px 6px; }
.color { --sun: #5bd83a; }
.seg.live .color { color: #079fdc; }
.gray { --sun: #808080; }
.seg.live .gray { color: #808080; }
.outline { flex: 1; min-height: 0; display: flex; }
.outline ul { flex: 1; display: grid; grid-auto-rows: 1fr; }
.outline li { display: flex; align-items: center; gap: 8px; padding-left: 25px; font-size: 13px; }
.outline .top { padding-left: 7px; gap: 11px; font-weight: bold; }
.g { width: 20px; border: 1px solid #bbb; }
.g.text { height: 13px; border-top: 2px solid #999; }
.g.area { height: 20px; border-top: 2px solid #999; }
.g.box { height: 21px; background: #fff; border: 1px solid #555; }
.g.bar { height: 7px; background: #fff; border: 2px solid #888; }
.g.a { border: 0; text-align: center; font: 17px/20px "Liberation Serif", serif; color: #555; }
```
